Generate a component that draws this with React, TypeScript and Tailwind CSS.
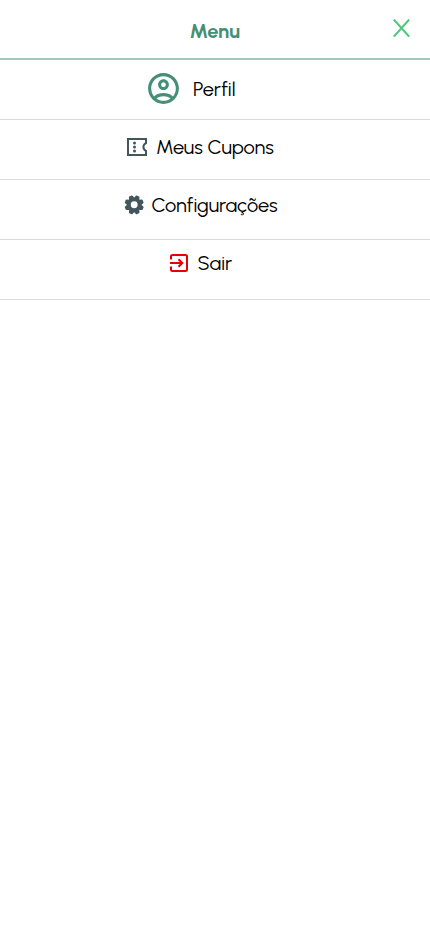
import type { ReactNode } from "react";
import { MdOutlineAccountCircle } from "react-icons/md";

const TicketIcon = () => (
  <svg width="20" height="18" viewBox="0 0 20 18" fill="none" stroke="#43555d" strokeWidth="2">
    <path d="M1 1H19V5.2C17.4 5.9 16.4 7.2 16.4 9S17.4 12.1 19 12.8V17H1Z" />
    <g fill="#43555d" stroke="none">
      <circle cx="7.5" cy="5" r="1.5" />
      <circle cx="7.5" cy="9" r="1.5" />
      <circle cx="7.5" cy="13" r="1.5" />
    </g>
  </svg>
);

const teeth = [0, 45, 90, 135];

const GearIcon = () => (
  <svg width="20" height="20" viewBox="-10.4 -10 20.4 20.4">
    <g fill="#43555d" transform="rotate(22.5)">
      {teeth.map((angle) => (
        <path
          key={angle}
          transform={`rotate(${angle})`}
          d="M-2.7 -7 L-2 -9.2 Q-1.8 -9.8 -1.2 -9.8 H1.2 Q1.8 -9.8 2 -9.2 L2.7 -7 V7 L2 9.2 Q1.8 9.8 1.2 9.8 H-1.2 Q-1.8 9.8 -2 9.2 L-2.7 7Z"
        />
      ))}
      <circle r="7.5" />
    </g>
    <circle r="3.5" fill="#fff" />
  </svg>
);

const ExitIcon = () => (
  <svg width="18" height="18" viewBox="0 0 18 18" fill="none" stroke="#e60000" strokeWidth="2">
    <path d="M1 5.5V2.5Q1 1 2.5 1H15.5Q17 1 17 2.5V15.5Q17 17 15.5 17H2.5Q1 17 1 15.5V12.5" />
    <path d="M0 9H12M8.5 5.2 12.3 9 8.5 12.8" />
  </svg>
);

type RowProps = { icon: ReactNode; label: string; row: string; text: string };

const Row = ({ icon, label, row, text }: RowProps) => (
  <a className={`flex h-[60px] items-start border-b border-[#d9d9d9] ${row}`}>
    {icon}
    <span className={`whitespace-nowrap text-[20px] leading-6 text-black ${text}`}>{label}</span>
  </a>
);

export default function App() {
  return (
    <main className="min-h-screen bg-white font-['Urbanist','Lato',sans-serif] antialiased">
      <header className="flex h-[60px] items-start border-b-2 border-[#a0c8b9] pl-[189.5px] pr-[20px] pt-[19px]">
        <h1 className="text-[20px] font-bold leading-6 text-[#458f76]">Menu</h1>
        <svg className="ml-auto" width="17" height="18" viewBox="0 0 17 18" fill="none" stroke="#4fc779" strokeWidth="2">
          <path d="M.8.5 16.2 17.7M16.2.5.8 17.7" />
        </svg>
      </header>
      <nav>
        <Row
          label="Perfil"
          row="pl-[145px] pt-[10px]"
          text="ml-[11px] mt-[7px]"
          icon={<MdOutlineAccountCircle size={37} color="#458f76" />}
        />
        <Row
          label="Meus Cupons"
          row="pl-[127px] pt-[15px]"
          text="ml-[9px]"
          icon={<div className="pt-[3px]"><TicketIcon /></div>}
        />
        <Row
          label="Configurações"
          row="pl-[124px] pt-[13px]"
          text="ml-[7.5px]"
          icon={<div className="pt-[2px]"><GearIcon /></div>}
        />
        <Row
          label="Sair"
          row="pl-[170px] pt-[11px]"
          text="ml-[9.5px]"
          icon={<div className="pt-[3px]"><ExitIcon /></div>}
        />
      </nav>
    </main>
  );
}
